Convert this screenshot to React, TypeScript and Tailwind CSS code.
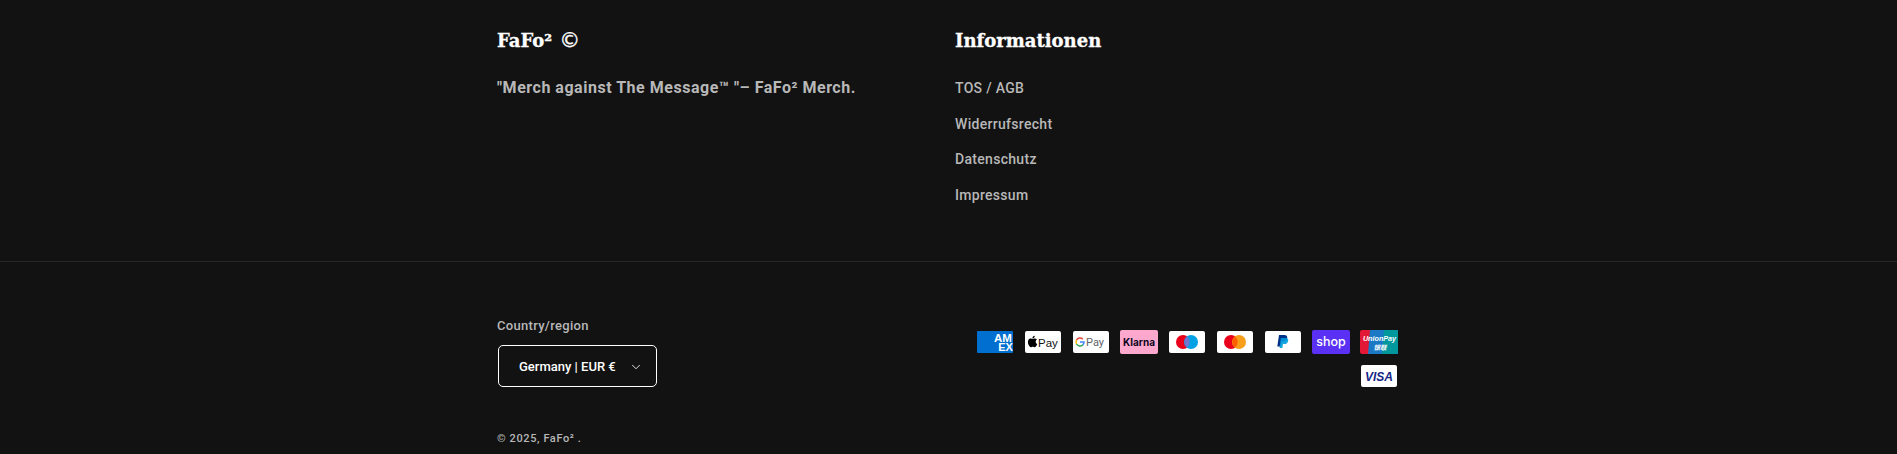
import { ChevronDown } from "lucide-react";

const LINKS = ["TOS / AGB", "Widerrufsrecht", "Datenschutz", "Impressum"];

// white cards have a 1px dark edge around them, coloured ones fill the 38x24 box
function Card({ white = true, children }: { white?: boolean; children: React.ReactNode }) {
  return (
    <svg viewBox="0 0 38 24" className="h-6 w-[38px]" role="img">
      {white && <rect x="1" y="1" width="36" height="22" rx="2" fill="#fff" />}
      {children}
    </svg>
  );
}

function Amex() {
  return (
    <Card white={false}>
      <rect x="1" y="1" width="36" height="22" rx="1" fill="#006fcf" />
      <text x="27" y="12.200" textAnchor="middle" fontSize="11.500" fontWeight="700" fill="#fff" fontFamily="Liberation Sans">AM</text>
      <text x="29.500" y="20.800" textAnchor="middle" fontSize="11" fontWeight="700" fill="#fff" fontFamily="Liberation Sans">EX</text>
    </Card>
  );
}

function ApplePay() {
  return (
    <Card>
      <path d="M9.600 8.900c.5-.6.8-1.300.7-2-.7 0-1.400.4-1.900 1-.4.5-.8 1.300-.7 2 .8 0 1.500-.4 1.900-1zm.7 1.100c-1-.1-1.900.6-2.400.6s-1.300-.6-2.100-.5c-1.100 0-2.100.6-2.600 1.600-1.100 1.900-.3 4.700.8 6.300.5.8 1.200 1.600 2 1.600s1.100-.5 2.100-.5 1.200.5 2.100.5 1.400-.8 1.900-1.500c.6-.9.900-1.700.9-1.800 0 0-1.700-.7-1.700-2.600 0-1.600 1.300-2.400 1.400-2.500-.8-1.100-2-1.200-2.400-1.200z" fill="#000" transform="translate(1.500 -.5) scale(.9)" />
      <text x="14" y="16.500" fontSize="11.500" fontWeight="500" fill="#111" fontFamily="Liberation Sans">Pay</text>
    </Card>
  );
}

function GooglePay() {
  return (
    <Card>
      <path d="M8 12h4a4 4 0 0 1-1.200 2.900" fill="none" stroke="#4285f4" strokeWidth="1.500" />
      <path d="M10.800 9.200A4 4 0 0 0 4.500 10" fill="none" stroke="#ea4335" strokeWidth="1.500" />
      <path d="M4.500 10a4 4 0 0 0 0 4" fill="none" stroke="#fbbc04" strokeWidth="1.500" />
      <path d="M4.500 14a4 4 0 0 0 6.300.9" fill="none" stroke="#34a853" strokeWidth="1.500" />
      <text x="14" y="16" fontSize="11" fill="#5f6368" fontFamily="Roboto">Pay</text>
    </Card>
  );
}

function Klarna() {
  return (
    <Card white={false}>
      <rect width="38" height="24" rx="2" fill="#ffa8cd" />
      <text x="19" y="15.800" textAnchor="middle" fontSize="10" fontWeight="700" fill="#0b051d" fontFamily="Inter">Klarna</text>
    </Card>
  );
}

function Maestro() {
  return (
    <Card>
      <circle cx="15" cy="12" r="7" fill="#eb001b" />
      <circle cx="23" cy="12" r="7" fill="#00a2e5" />
      <path d="M19 6.500a7 7 0 0 1 0 11 7 7 0 0 1 0-11z" fill="#7375cf" />
    </Card>
  );
}

function Mastercard() {
  return (
    <Card>
      <circle cx="15" cy="12" r="7" fill="#eb001b" />
      <circle cx="23" cy="12" r="7" fill="#f79e1b" />
      <path d="M19 6.500a7 7 0 0 1 0 11 7 7 0 0 1 0-11z" fill="#ff5f00" />
    </Card>
  );
}

function PayPal() {
  return (
    <Card>
      <path d="M15 5h5.200c2.300 0 3.300 1.300 3 3.100-.4 2.300-1.900 3.500-4.100 3.500h-1.700l-.8 4.900h-3.300z" fill="#003087" />
      <path d="M16.800 8h5c1.900 0 2.700 1.200 2.400 2.900-.4 2-1.800 3.100-3.700 3.100h-1.500l-.6 4h-2.800z" fill="#009cde" opacity=".9" />
    </Card>
  );
}

function Shop() {
  return (
    <Card white={false}>
      <rect width="38" height="24" rx="2" fill="#5a31f4" />
      <text x="19" y="16" textAnchor="middle" fontSize="12.500" fontWeight="500" fill="#fff" fontFamily="Inter">shop</text>
    </Card>
  );
}

function UnionPay() {
  return (
    <Card white={false}>
      <rect width="38" height="24" rx="2" fill="#e21836" />
      <path d="M10 0h28v24H8z" fill="#1a78c4" />
      <path d="M24 0h12a2 2 0 0 1 2 2v20a2 2 0 0 1-2 2H22z" fill="#00979d" />
      <text x="19.500" y="11" textAnchor="middle" fontSize="7.200" fontWeight="700" fontStyle="italic" fill="#fff" fontFamily="Liberation Sans">UnionPay</text>
      <text x="20" y="19.500" textAnchor="middle" fontSize="6.500" fontWeight="700" fontStyle="italic" fill="#fff" fontFamily="Noto Sans CJK SC">银联</text>
    </Card>
  );
}

function Visa() {
  return (
    <Card>
      <text x="19" y="16.500" textAnchor="middle" fontSize="12" fontWeight="800" fontStyle="italic" fill="#142688" fontFamily="Liberation Sans">VISA</text>
    </Card>
  );
}

export default function App() {
  return (
    <footer className="h-[454px] overflow-hidden bg-[#121212] font-['Roboto',sans-serif] text-[#b8b8b8]">
      <div className="mx-auto w-[903px] pt-[27px]">
        <div className="flex h-[234px]">
          <div className="w-[458px]">
            <h2 className="font-['DejaVu_Serif',serif] text-[18px] leading-[28px] font-bold text-white [-webkit-text-stroke:0.3px_white]">
              FaFo²
              <span className="ml-[7px] font-['DejaVu_Sans',sans-serif] text-[21px] leading-[20px] font-normal">©</span>
            </h2>
            <p className="mt-[23px] text-[16px] leading-[20px] font-bold tracking-[0.52px]">
              "Merch against The Message™ "– FaFo² Merch.
            </p>
          </div>
          <div>
            <h2 className="font-['DejaVu_Serif',serif] text-[18px] leading-[28px] font-bold text-white [-webkit-text-stroke:0.3px_white]">
              Informationen
            </h2>
            <ul className="mt-[23px] flex flex-col gap-[15.500px] text-[14px] leading-[20px] font-medium tracking-[0.3px]">
              {LINKS.map((l) => (
                <li key={l}>{l}</li>
              ))}
            </ul>
          </div>
        </div>
      </div>
      <div className="h-px bg-[#262626]" />
      <div className="mx-auto w-[903px] pt-[54px]">
        <div className="flex justify-between">
          <div>
            <div className="text-[13px] leading-[20px] font-medium tracking-[0.3px]">Country/region</div>
            <button className="mt-[9px] ml-px flex h-[42px] w-[159px] items-center rounded-[5px] border border-white pt-px pl-[20px] text-[13px] font-medium whitespace-nowrap text-white">
              Germany | EUR €
              <ChevronDown className="ml-[13px] h-[14px] w-[14px]" strokeWidth={1.500} />
            </button>
          </div>
          <div className="mt-[14px] mr-[2px] flex w-[422px] flex-wrap content-start justify-end gap-x-[10px] gap-y-[10px]">
            <Amex />
            <ApplePay />
            <GooglePay />
            <Klarna />
            <Maestro />
            <Mastercard />
            <PayPal />
            <Shop />
            <UnionPay />
            <Visa />
          </div>
        </div>
        <div className="mt-[43px] text-[11px] leading-[16px] font-medium tracking-[0.6px]">© 2025, FaFo² .</div>
      </div>
    </footer>
  );
}
